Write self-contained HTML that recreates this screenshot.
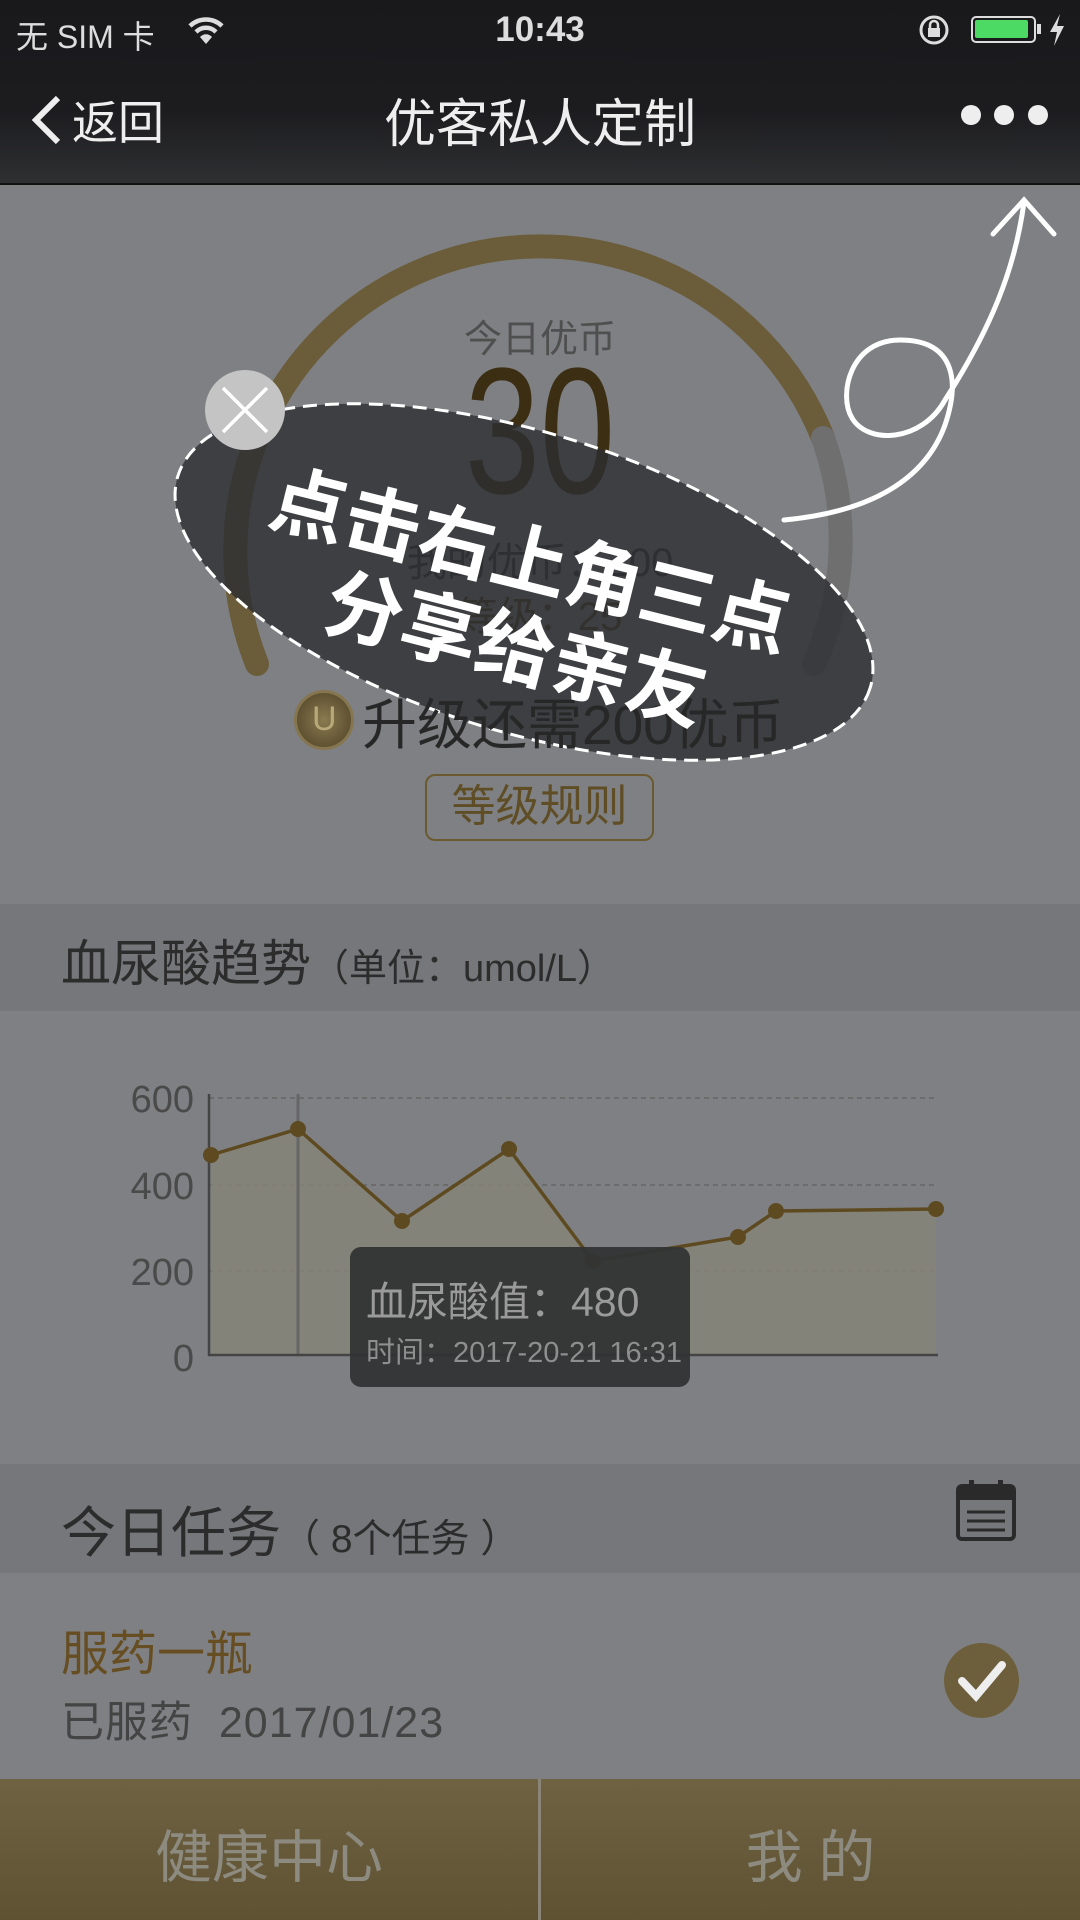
<!DOCTYPE html>
<html><head><meta charset="utf-8"><style>
*{margin:0;padding:0;box-sizing:border-box}
body{width:1080px;height:1920px;overflow:hidden;background:#7f8083;font-family:"Liberation Sans","Noto Sans CJK SC",sans-serif;position:relative}
.a{position:absolute;white-space:nowrap}
</style></head><body>
<div class="a" style="left:0;top:0;width:1080px;height:185px;background:linear-gradient(#19191c 0,#1c1c1f 110px,#2f3032 184px);border-bottom:2px solid #111"></div>
<div class="a" style="left:16px;top:12px;font-size:32px;color:#ddd">无 SIM 卡</div>
<svg class="a" style="left:186px;top:14px" width="40" height="32" viewBox="0 0 40 32"><path d="M4 12 A23 23 0 0 1 36 12" stroke="#ddd" stroke-width="4.5" fill="none"/><path d="M10 18 A14 14 0 0 1 30 18" stroke="#ddd" stroke-width="4.5" fill="none"/><path d="M20 30 L14 23 A8 8 0 0 1 26 23Z" fill="#ddd"/></svg>
<div class="a" style="left:0;width:1080px;text-align:center;top:10px;font-size:35px;font-weight:bold;color:#ddd">10:43</div>
<svg class="a" style="left:918px;top:14px" width="34" height="32"><circle cx="16" cy="16" r="13" stroke="#ddd" stroke-width="3" fill="none"/><rect x="10" y="14" width="12" height="9" fill="#ddd"/><path d="M12 14 v-3 a4 4 0 0 1 8 0 v3" stroke="#ddd" stroke-width="2.5" fill="none"/></svg>
<div class="a" style="left:971px;top:16px;width:65px;height:27px;border:2.5px solid #ddd;border-radius:5px;padding:2px"><div style="width:53px;height:18px;background:#4cd964;border-radius:2px"></div></div>
<div class="a" style="left:1037px;top:24px;width:4px;height:10px;background:#ddd"></div>
<svg class="a" style="left:1048px;top:14px" width="18" height="32"><path d="M12 0 L2 18 H9 L6 32 L16 12 H9Z" fill="#ddd"/></svg>
<svg class="a" style="left:28px;top:94px" width="36" height="52"><path d="M30 4 L8 26 L30 48" stroke="#eee" stroke-width="6" fill="none"/></svg>
<div class="a" style="left:72px;top:87px;font-size:46px;color:#eee">返回</div>
<div class="a" style="left:0;width:1080px;text-align:center;top:82px;font-size:52px;color:#eee">优客私人定制</div>
<div class="a" style="left:961px;top:105px;width:20px;height:20px;border-radius:50%;background:#eee"></div>
<div class="a" style="left:994px;top:105px;width:20px;height:20px;border-radius:50%;background:#eee"></div>
<div class="a" style="left:1028px;top:105px;width:20px;height:20px;border-radius:50%;background:#eee"></div>

<svg class="a" style="left:0;top:0" width="1080" height="900">
<path d="M257 664 A302 302 0 0 1 823 438" stroke="#6b5c3a" stroke-width="24" fill="none" stroke-linecap="round"/>
<path d="M823 438 A302 302 0 0 1 814 664" stroke="#6f6f70" stroke-width="24" fill="none" stroke-linecap="round"/>
</svg>
<div class="a" style="left:0;width:1080px;text-align:center;top:308px;font-size:38px;color:#4f4f4f">今日优币</div>
<div class="a" style="left:0;width:1080px;text-align:center;top:342px;font-size:180px;font-weight:200;color:#3b2e13;line-height:1;transform:scaleX(.75)">30</div>
<div class="a" style="left:0;width:1080px;text-align:center;top:530px;font-size:40px;color:#333">我的优币：200</div>
<div class="a" style="left:0;width:1080px;text-align:center;top:584px;font-size:40px;color:#4d3d1d">等级：25</div>

<svg class="a" style="left:0;top:0" width="1080" height="900">
<g transform="rotate(17 524 582)"><ellipse cx="524" cy="582" rx="362" ry="150" fill="rgba(45,46,50,0.8)" stroke="#fff" stroke-width="3" stroke-dasharray="14 8"/></g>
</svg>

<div class="a" style="left:294px;top:690px;width:60px;height:60px;border-radius:50%;background:radial-gradient(#8a7a50,#5f5232 70%,#7a6c48);border:3px solid #857650"></div>
<div class="a" style="left:312px;top:700px;font-size:34px;color:#b9a979">U</div>
<div class="a" style="left:362px;top:680px;font-size:55px;color:#272727">升级还需200优币</div>

<div class="a" style="left:266px;top:500px;font-size:76px;font-weight:bold;color:#fff;transform:rotate(14deg);transform-origin:center">点击右上角三点</div>
<div class="a" style="left:322px;top:588px;font-size:78px;font-weight:bold;color:#fff;transform:rotate(14.5deg);transform-origin:center">分享给亲友</div>

<div class="a" style="left:205px;top:370px;width:80px;height:80px;border-radius:50%;background:#c4c4c4"></div>
<svg class="a" style="left:205px;top:370px" width="80" height="80"><path d="M18 18 L62 62 M62 18 L18 62" stroke="#fff" stroke-width="3.5"/></svg>

<svg class="a" style="left:0;top:0" width="1080" height="560">
<path d="M784 520 C870 512 925 480 945 425 C962 375 950 340 900 340 C850 340 838 395 852 418 C868 445 922 442 945 400 C990 330 1015 270 1024 202" stroke="#fff" stroke-width="5" fill="none" stroke-linecap="round"/>
<path d="M993 234 L1024 200 L1054 234" stroke="#fff" stroke-width="5" fill="none" stroke-linecap="round"/>
</svg>

<div class="a" style="left:425px;top:774px;width:229px;height:67px;border:2px solid #6b5a30;border-radius:10px;text-align:center;font-size:44px;line-height:62px;color:#5f4e25">等级规则</div>

<div class="a" style="left:0;top:904px;width:1080px;height:107px;background:#76777a"></div>
<div class="a" style="left:61px;top:924px;font-size:50px;color:#2c2c2c">血尿酸趋势<span style="font-size:38px">（单位：umol/L）</span></div>

<svg class="a" style="left:0;top:1011px" width="1080" height="453">
<g stroke="#666" stroke-dasharray="5 4" stroke-width="1.5"><line x1="209" y1="87" x2="938" y2="87"/><line x1="209" y1="174" x2="938" y2="174"/><line x1="209" y1="260" x2="938" y2="260"/></g>
<path d="M211 144 L298 118 L402 210 L509 138 L593 250 L738 226 L776 200 L936 198 L936 344 L211 344Z" fill="#858378" opacity=".9"/>
<line x1="298" y1="83" x2="298" y2="344" stroke="#666" stroke-width="3"/>
<path d="M209 83 V344 H938" stroke="#444" stroke-width="2.5" fill="none"/>
<path d="M211 144 L298 118 L402 210 L509 138 L593 250 L738 226 L776 200 L936 198" stroke="#5e4a20" stroke-width="3.5" fill="none"/>
<g fill="#5e4a20"><circle cx="211" cy="144" r="8"/><circle cx="298" cy="118" r="8"/><circle cx="402" cy="210" r="8"/><circle cx="509" cy="138" r="8"/><circle cx="593" cy="250" r="8"/><circle cx="738" cy="226" r="8"/><circle cx="776" cy="200" r="8"/><circle cx="936" cy="198" r="8"/></g>
<g font-size="38" fill="#4a4a4a" text-anchor="end" font-family="Liberation Sans,sans-serif"><text x="194" y="101">600</text><text x="194" y="188">400</text><text x="194" y="274">200</text><text x="194" y="360">0</text></g>
<rect x="350" y="236" width="340" height="140" rx="11" fill="#323334" opacity=".95"/>
<text x="366" y="305" font-size="41" fill="#9a9a9a" font-family="Liberation Sans,Noto Sans CJK SC,sans-serif">血尿酸值：480</text>
<text x="366" y="351" font-size="29" fill="#8e8e8e" font-family="Liberation Sans,Noto Sans CJK SC,sans-serif">时间：2017-20-21 16:31</text>
</svg>

<div class="a" style="left:0;top:1464px;width:1080px;height:109px;background:#76777a"></div>
<div class="a" style="left:61px;top:1488px;font-size:55px;color:#2c2c2c">今日任务<span style="font-size:39px">（ 8个任务 ）</span></div>
<svg class="a" style="left:955px;top:1480px" width="62" height="62"><rect x="3" y="6" width="56" height="53" rx="4" fill="none" stroke="#2a2a2a" stroke-width="4"/><rect x="3" y="6" width="56" height="14" fill="#2a2a2a"/><rect x="14" y="0" width="5" height="10" fill="#2a2a2a"/><rect x="43" y="0" width="5" height="10" fill="#2a2a2a"/><path d="M12 32 H50 M12 41 H50 M12 50 H50" stroke="#2a2a2a" stroke-width="3"/></svg>

<div class="a" style="left:61px;top:1614px;font-size:48px;color:#664e22">服药一瓶</div>
<div class="a" style="left:61px;top:1688px;font-size:43px;color:#444;letter-spacing:1px">已服药&nbsp;&nbsp;2017/01/23</div>
<div class="a" style="left:944px;top:1643px;width:75px;height:75px;border-radius:50%;background:#6d5f3c"></div>
<svg class="a" style="left:944px;top:1643px" width="75" height="75"><path d="M18 38 L32 53 L58 22" stroke="#eee" stroke-width="8" fill="none" stroke-linecap="round"/></svg>

<div class="a" style="left:0;top:1779px;width:1080px;height:141px;background:linear-gradient(#6e6242,#5e5233)"></div>
<div class="a" style="left:538px;top:1779px;width:3px;height:141px;background:#8a8576"></div>
<div class="a" style="left:0;width:538px;text-align:center;top:1812px;font-size:57px;color:#8d8a80">健康中心</div>
<div class="a" style="left:541px;width:539px;text-align:center;top:1812px;font-size:57px;color:#8d8a80">我 的</div>
</body></html>
